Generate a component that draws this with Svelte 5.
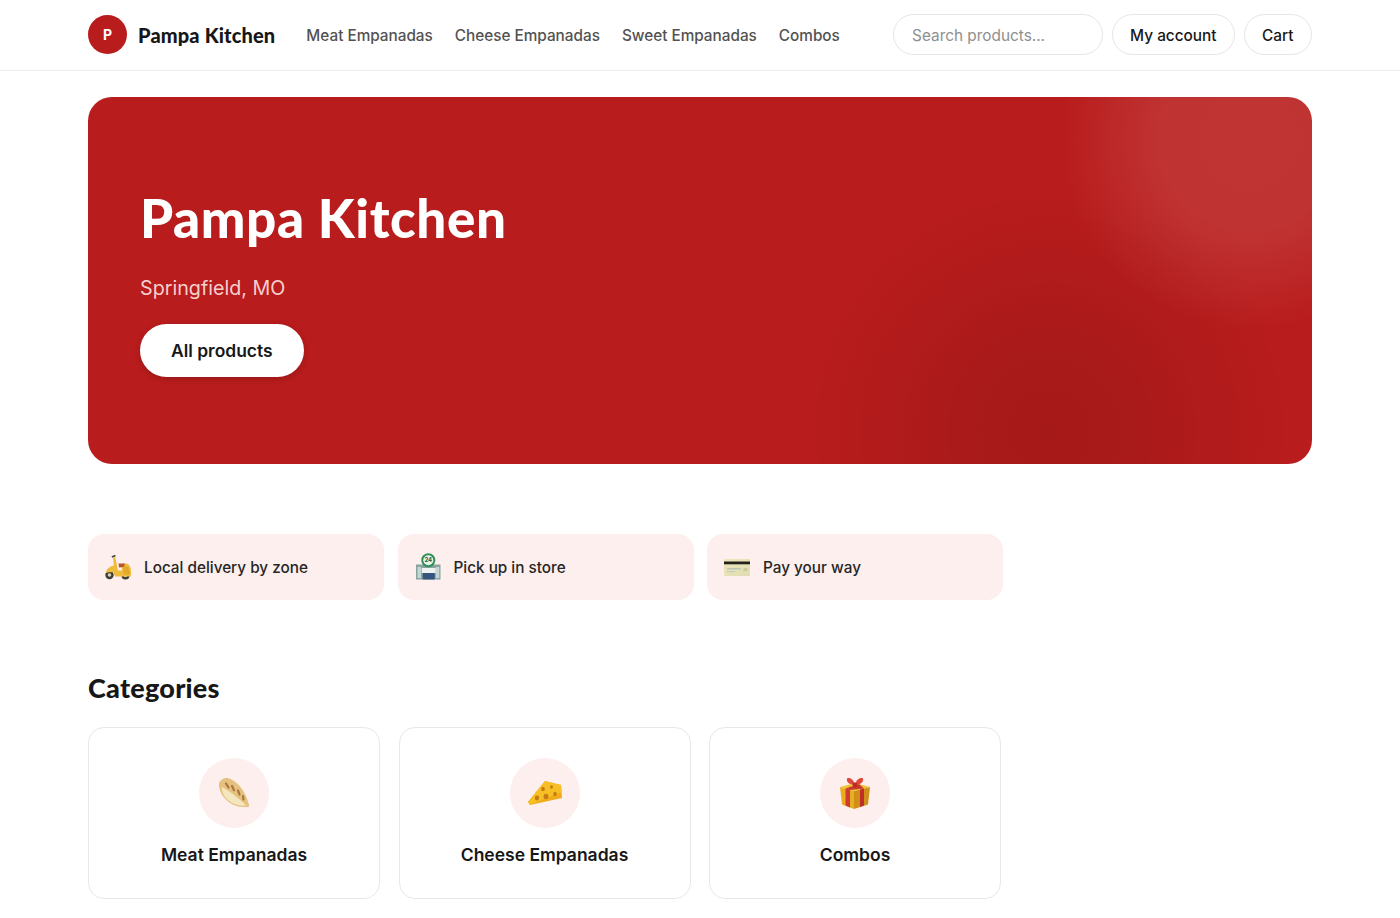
<script lang="ts">
  const navLinks = ['Meat Empanadas', 'Cheese Empanadas', 'Sweet Empanadas', 'Combos'];
  const features = [
    { id: 'scooter', label: 'Local delivery by zone' },
    { id: 'store', label: 'Pick up in store' },
    { id: 'card', label: 'Pay your way' }
  ];
  const categories = [
    { id: 'empanada', label: 'Meat Empanadas' },
    { id: 'cheese', label: 'Cheese Empanadas' },
    { id: 'gift', label: 'Combos' }
  ];
</script>

{#snippet emoji(id: string)}
  {#if id === 'scooter'}
    <svg viewBox="0 0 28 28" width="28" height="28" aria-hidden="true">
      <path d="M7.500 3.200l3.600-1.400.7 1.500-3.400 1.500z" fill="#4a443a" />
      <circle cx="5.500" cy="22" r="4.200" fill="#3f3b35" />
      <circle cx="5.500" cy="22" r="1.800" fill="#d8d2bc" />
      <circle cx="21.500" cy="22.500" r="4" fill="#3f3b35" />
      <circle cx="21.500" cy="22.500" r="1.700" fill="#d8d2bc" />
      <path d="M9 4.500l2.200-.5 2.800 13.500 4 0c-.3-3 .3-6 2.500-7 3-.5 5.500 1.500 6.200 5 .5 3 .3 6-.2 8H11l-1.500-4.500c-2 .5-5-.500-7.500 1 .2-3.500 3-6.500 7.800-7.500z" fill="#eebc3a" />
      <path d="M14.500 10.500h6.500l-1 3.500-5 .5z" fill="#b9562c" />
      <path d="M20 12.500c3 .2 5 2 5.500 5l.5 4h-6c-1-3-1-6 0-9z" fill="#e3a92a" />
    </svg>
  {:else if id === 'store'}
    <svg viewBox="0 0 28 28" width="28" height="28" aria-hidden="true">
      <rect x="2" y="11.500" width="24.500" height="15" fill="#88a3a0" />
      <rect x="3.500" y="14" width="3.500" height="11" fill="#c5d6d3" />
      <rect x="21.800" y="14" width="3.500" height="11" fill="#c5d6d3" />
      <rect x="7.700" y="15" width="14" height="5" fill="#eef2f0" />
      <rect x="8.700" y="20" width="12" height="6.500" fill="#35557f" />
      <circle cx="14.300" cy="7.200" r="7" fill="#2f8f57" />
      <circle cx="14.300" cy="7.200" r="5" fill="#eaf4ea" />
      <text x="14.300" y="9.400" text-anchor="middle" class="clock">24</text>
    </svg>
  {:else if id === 'card'}
    <svg viewBox="0 0 28 28" width="28" height="28" aria-hidden="true">
      <defs>
        <linearGradient id="cardface" x1="0" y1="0" x2="1" y2="1">
          <stop offset="0" stop-color="#efe6ba" />
          <stop offset="1" stop-color="#dfdcb2" />
        </linearGradient>
      </defs>
      <rect x="1" y="6" width="26" height="17" rx="1" fill="url(#cardface)" />
      <rect x="1" y="8.500" width="26" height="2.800" fill="#24211b" />
      <rect x="4" y="15" width="14" height="1.500" fill="#bcc5b8" />
      <rect x="4" y="18" width="8" height="1.200" fill="#c7cdbb" />
      <rect x="20.500" y="15" width="4" height="3" fill="#cdc79c" />
    </svg>
  {:else if id === 'empanada'}
    <svg viewBox="0 0 34 34" width="34" height="34" aria-hidden="true">
      <path d="M2 7.300C3.500 3.500 7 1.500 10.500 2c8 2 17 11 20.500 23.700.8 2 1.300 3.500 1 5-4 .5-9 .3-12.300-.7-5.500-1.500-10-5-12.700-8.500C4.500 18.500 1.500 13 2 7.300z" fill="#e6c07e" />
      <path d="M4.500 11c6 2.500 18 11.500 24.500 18.500-3 .5-6 .2-9-.7-5.500-1.500-9.500-4.500-12-7.800C6 18 4.800 14.500 4.500 11z" fill="#f4e6bf" />
      <path d="M9 7.500l2.500 4M15 10l2 4.200M21 14.500l1.500 4M26 20l.5 3.500" stroke="#a8783e" stroke-width="2.200" stroke-linecap="round" fill="none" />
    </svg>
  {:else if id === 'cheese'}
    <svg viewBox="0 0 34 34" width="34" height="34" aria-hidden="true">
      <path d="M0 26L17 5l16 4 1 13-32 7z" fill="#f0ac1a" />
      <path d="M17 5l16 4 .500 7L2 28.500 0 26z" fill="#f7bf26" />
      <ellipse cx="15" cy="13" rx="1.800" ry="2.200" fill="#c47c10" />
      <ellipse cx="23.500" cy="11" rx="1.500" ry="1.800" fill="#c47c10" />
      <ellipse cx="9" cy="22" rx="2.200" ry="2.400" fill="#c47c10" />
      <ellipse cx="18" cy="20.500" rx="2.400" ry="2.800" fill="#c47c10" />
      <ellipse cx="27" cy="18" rx="1.700" ry="2.300" fill="#c47c10" />
    </svg>
  {:else}
    <svg viewBox="0 0 34 34" width="34" height="34" aria-hidden="true">
      <path d="M2 11l14 4v18L4 28.500z" fill="#e9ae1f" />
      <path d="M32 11l-16 4v18l14-4.500z" fill="#cf8f18" />
      <path d="M2 11l15-4 15 4-16 4z" fill="#f2c033" />
      <path d="M7.500 12.500l4.500 1.500v17.500l-4.500-2z" fill="#d13a30" />
      <path d="M22 13.500l4-1v17l-4 1.500z" fill="#bf2f28" />
      <path d="M7.500 12.500L21 8l5 4.500L12 14z" fill="#c93a2e" />
      <path d="M17 9C11.500 8.500 8 6 9 2.500c2.500-1.500 7 1 8 6.500zM17 9c5.500-.5 9-3 8-6.500-2.500-1.500-7 1-8 6.500z" fill="#e0483a" />
      <circle cx="17" cy="9" r="2.400" fill="#b82c24" />
    </svg>
  {/if}
{/snippet}

<header class="topbar">
  <div class="topbar-inner">
    <a class="brand" href="#home">
      <span class="brand-mark">P</span>
      <span class="brand-name">Pampa Kitchen</span>
    </a>
    <nav class="main-nav">
      {#each navLinks as link}
        <a href="#cat">{link}</a>
      {/each}
    </nav>
    <div class="actions">
      <input class="search" type="text" placeholder="Search products..." />
      <button type="button" class="pill">My account</button>
      <button type="button" class="pill">Cart</button>
    </div>
  </div>
</header>

<main class="page">
  <section class="hero">
    <h1>Pampa Kitchen</h1>
    <p>Springfield, MO</p>
    <a class="hero-cta" href="#all">All products</a>
  </section>

  <section class="features">
    {#each features as item}
      <div class="feature">
        {@render emoji(item.id)}
        <span>{item.label}</span>
      </div>
    {/each}
  </section>

  <section class="categories">
    <h2>Categories</h2>
    <div class="category-grid">
      {#each categories as cat}
        <a class="category" href="#cat">
          <span class="category-icon">{@render emoji(cat.id)}</span>
          <span class="category-label">{cat.label}</span>
        </a>
      {/each}
    </div>
  </section>
</main>

<style>
  :global(body) { background: #fff; color: #171717; font-family: Inter, "Liberation Sans", sans-serif; }
  a { color: inherit; text-decoration: none; }
  .clock { font: 700 6px Inter, sans-serif; fill: #24613f; }
  .topbar { border-bottom: 1px solid #ececec; }
  .topbar-inner { box-sizing: border-box; width: 1224px; height: 70px; padding-bottom: 1px; margin: 0 auto; display: flex; align-items: center; }
  .brand { display: flex; align-items: center; gap: 11px; }
  .brand-mark { width: 39px; height: 39px; border-radius: 50%; background: #b91c1c; color: #fff; display: grid; place-items: center; font-size: 14px; font-weight: 700; }
  .brand-name { font-family: Lato, sans-serif; font-weight: 900; font-size: 20px; letter-spacing: .15px; color: #171717; }
  .main-nav { display: flex; gap: 22px; margin-left: 31px; padding-top: 1px; font-size: 15.300px; font-weight: 500; color: #525252; }
  .actions { margin-left: auto; display: flex; gap: 8.500px; align-items: center; }
  .search { box-sizing: border-box; width: 210px; height: 41px; border: 1px solid #e5e5e5; border-radius: 21px; padding: 1px 18px 0; font: 400 15.360px Inter, sans-serif; background: #fff; outline: none; }
  .search::placeholder { color: #8f8f8f; opacity: 1; }
  .pill { box-sizing: border-box; height: 41px; padding: 1px 17.500px 0; border: 1px solid #e5e5e5; border-radius: 21px; background: #fff; color: #171717; font: 500 15.360px Inter, sans-serif; }

  .page { box-sizing: border-box; width: 1224px; margin: 0 auto; padding-top: 26px; }
  .hero { box-sizing: border-box; height: 367px; border-radius: 24px; padding: 91px 52px 0; color: #fff; display: flex; flex-direction: column; align-items: flex-start; background:
    radial-gradient(circle 190px at 1162px 43px, rgba(255, 255, 255, .105) 0, rgba(255, 255, 255, .1) 90px, rgba(255, 255, 255, 0) 190px),
    radial-gradient(circle 250px at 962px 333px, rgba(0, 0, 0, .1) 0, rgba(0, 0, 0, .09) 70px, rgba(0, 0, 0, 0) 250px),
    #b91c1c; }
  .hero h1 { margin: 0; font-family: Lato, sans-serif; font-weight: 900; font-size: 53px; letter-spacing: .6px; line-height: 60px; }
  .hero p { margin: 25px 0 0; font-size: 19.700px; line-height: 30px; color: #f6cfcf; }
  .hero-cta { margin-top: 21px; height: 53px; padding: 0 31px; border-radius: 27px; background: #fff; color: #171717; font-weight: 600; font-size: 17.450px; display: flex; align-items: center; box-shadow: 0 2px 6px rgba(0, 0, 0, .18); }

  .features { margin-top: 70px; display: grid; grid-template-columns: repeat(3, 296px); gap: 13.500px; }
  .feature { height: 66px; box-sizing: border-box; padding: 0 16px; display: flex; align-items: center; gap: 12px; border-radius: 16px; background: #fcefed; font-size: 15.300px; font-weight: 500; color: #262626; }

  .categories { margin-top: 70px; }
  .categories h2 { margin: 0; font-family: Lato, sans-serif; font-weight: 900; font-size: 27px; letter-spacing: .25px; line-height: 36px; }
  .category-grid { margin-top: 21px; display: grid; grid-template-columns: repeat(3, 292px); gap: 18.500px; }
  .category { box-sizing: border-box; height: 172px; border: 1px solid #e8e8e8; border-radius: 16px; padding-top: 30px; display: flex; flex-direction: column; align-items: center; }
  .category-icon { width: 70px; height: 70px; border-radius: 50%; background: #fcefed; display: grid; place-items: center; }
  .category-label { margin-top: 15px; font-size: 17.500px; font-weight: 600; line-height: 24px; color: #171717; }
</style>
